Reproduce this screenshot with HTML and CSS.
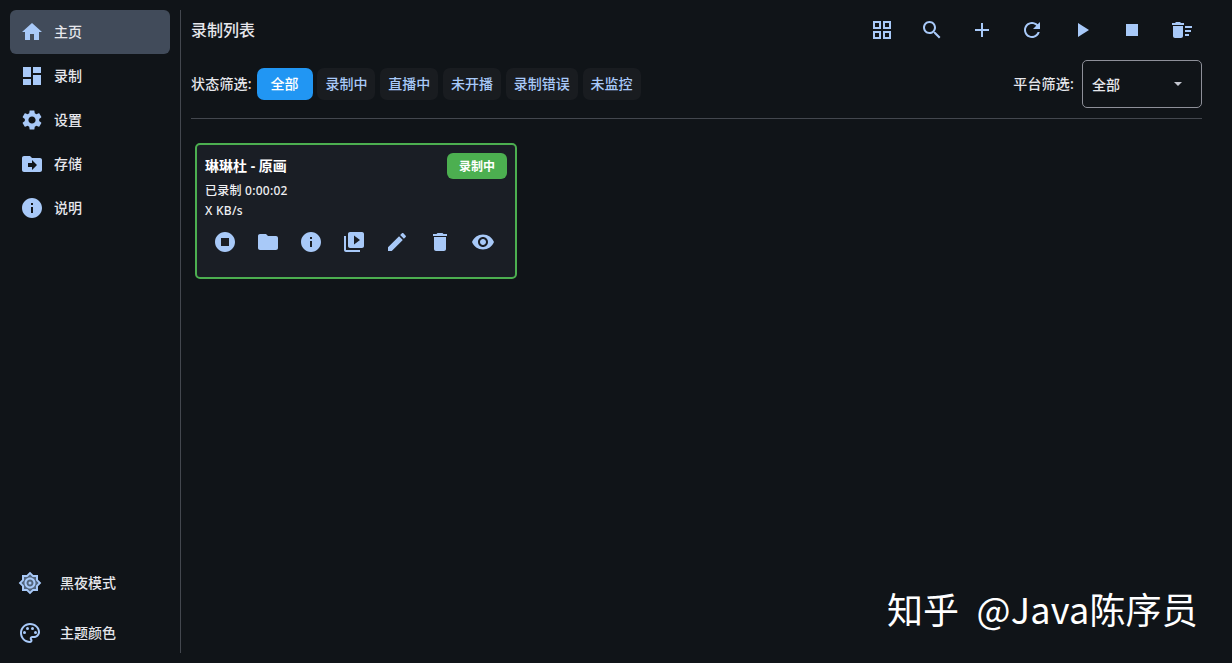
FILE: index.html
```html
<!DOCTYPE html>
<html lang="zh-CN">
<head>
  <meta charset="UTF-8"/>
  <title>录制列表</title>
  <link rel="stylesheet" href="styles.css">
</head>
<body>
  <div class="app">
    <nav class="rail">
      <div class="rail-list">
        <div class="rail-item active">
          <svg class="icon" viewBox="0 0 24 24"><path d="M10 20v-6h4v6h5v-8h3L12 3 2 12h3v8z"/></svg>
          <span>主页</span>
        </div>
        <div class="rail-item">
          <svg class="icon" viewBox="0 0 24 24"><path d="M3 13h8V3H3v10zm0 8h8v-6H3v6zm10 0h8V11h-8v10zm0-18v6h8V3h-8z"/></svg>
          <span>录制</span>
        </div>
        <div class="rail-item">
          <svg class="icon" viewBox="0 0 24 24"><path d="M19.14 12.94c.04-.3.06-.61.06-.94 0-.32-.02-.64-.07-.94l2.03-1.58c.18-.14.23-.41.12-.61l-1.92-3.32c-.12-.22-.37-.29-.59-.22l-2.39.96c-.5-.38-1.03-.7-1.62-.94l-.36-2.54c-.04-.24-.24-.41-.48-.41h-3.84c-.24 0-.43.17-.47.41l-.36 2.54c-.59.24-1.13.57-1.62.94l-2.39-.96c-.22-.08-.47 0-.59.22L2.74 8.87c-.12.21-.08.47.12.61l2.03 1.58c-.05.3-.09.63-.09.94s.02.64.07.94l-2.03 1.58c-.18.14-.23.41-.12.61l1.92 3.32c.12.22.37.29.59.22l2.39-.96c.5.38 1.03.7 1.62.94l.36 2.54c.05.24.24.41.48.41h3.84c.24 0 .44-.17.47-.41l.36-2.54c.59-.24 1.13-.56 1.62-.94l2.39.96c.22.08.47 0 .59-.22l1.92-3.32c.12-.22.07-.47-.12-.61l-2.01-1.58zM12 15.6c-1.98 0-3.6-1.62-3.6-3.6s1.62-3.6 3.6-3.6 3.6 1.62 3.6 3.6-1.62 3.6-3.6 3.6z"/></svg>
          <span>设置</span>
        </div>
        <div class="rail-item">
          <svg class="icon" viewBox="0 0 24 24"><path d="M20 6h-8l-2-2H4c-1.1 0-2 .9-2 2v12c0 1.1.9 2 2 2h16c1.1 0 2-.9 2-2V8c0-1.1-.9-2-2-2zm-8 12v-3H8v-4h4V8l5 5-5 5z"/></svg>
          <span>存储</span>
        </div>
        <div class="rail-item">
          <svg class="icon" viewBox="0 0 24 24"><path d="M12 2C6.48 2 2 6.48 2 12s4.48 10 10 10 10-4.48 10-10S17.52 2 12 2zm1 15h-2v-6h2v6zm0-8h-2V7h2v2z"/></svg>
          <span>说明</span>
        </div>
      </div>
      <div class="rail-foot">
        <div class="foot-item">
          <span class="foot-btn"><svg class="icon" viewBox="0 0 24 24"><path opacity=".45" d="M18 9.52V6h-3.52L12 3.52 9.52 6H6v3.52L3.52 12 6 14.48V18h3.52L12 20.48 14.48 18H18v-3.52L20.48 12 18 9.52z"/><path d="M20 8.69V4h-4.69L12 .69 8.69 4H4v4.69L.69 12 4 15.31V20h4.69L12 23.31 15.31 20H20v-4.69L23.31 12 20 8.69zm-2 5.79V18h-3.52L12 20.48 9.52 18H6v-3.52L3.52 12 6 9.52V6h3.52L12 3.52 14.48 6H18v3.52L20.48 12 18 14.48zM12 6.5c-3.03 0-5.5 2.47-5.5 5.5s2.47 5.5 5.5 5.5 5.5-2.47 5.5-5.5-2.47-5.5-5.5-5.5zm0 9c-1.93 0-3.5-1.57-3.5-3.5s1.57-3.5 3.5-3.5 3.5 1.57 3.5 3.5-1.57 3.5-3.5 3.5z"/><circle cx="12" cy="12" r="1.5"/></svg></span>
          <span>黑夜模式</span>
        </div>
        <div class="foot-item">
          <span class="foot-btn"><svg class="icon" viewBox="0 0 24 24"><path d="M12 22C6.49 22 2 17.51 2 12S6.49 2 12 2s10 4.04 10 9c0 3.31-2.69 6-6 6h-1.77c-.28 0-.5.22-.5.5 0 .12.05.23.13.33.41.47.64 1.06.64 1.67 0 1.38-1.12 2.5-2.5 2.5zm0-18c-4.41 0-8 3.59-8 8s3.59 8 8 8c.28 0 .5-.22.5-.5a.54.54 0 0 0-.14-.35c-.41-.46-.63-1.05-.63-1.65 0-1.38 1.12-2.5 2.5-2.5H16c2.21 0 4-1.79 4-4 0-3.86-3.59-7-8-7z"/><circle cx="6.5" cy="11.5" r="1.5"/><circle cx="9.5" cy="7.5" r="1.5"/><circle cx="14.5" cy="7.5" r="1.5"/><circle cx="17.5" cy="11.5" r="1.5"/></svg></span>
          <span>主题颜色</span>
        </div>
      </div>
    </nav>

    <div class="rail-line"></div>

    <main class="main">
      <header class="top-row">
        <h1 class="title">录制列表</h1>
        <div class="tools">
          <span class="btn"><svg class="icon" viewBox="0 0 24 24"><path d="M3 3v8h8V3H3zm6 6H5V5h4v4zm-6 4v8h8v-8H3zm6 6H5v-4h4v4zm4-16v8h8V3h-8zm6 6h-4V5h4v4zm-6 4v8h8v-8h-8zm6 6h-4v-4h4v4z"/></svg></span>
          <span class="btn"><svg class="icon" viewBox="0 0 24 24"><path d="M15.5 14h-.79l-.28-.27C15.41 12.59 16 11.11 16 9.5 16 5.91 13.09 3 9.5 3S3 5.91 3 9.5 5.91 16 9.5 16c1.61 0 3.09-.59 4.23-1.57l.27.28v.79l5 4.99L20.49 19l-4.99-5zm-6 0C7.01 14 5 11.99 5 9.5S7.01 5 9.5 5 14 7.01 14 9.5 11.99 14 9.5 14z"/></svg></span>
          <span class="btn"><svg class="icon" viewBox="0 0 24 24"><path d="M19 13h-6v6h-2v-6H5v-2h6V5h2v6h6v2z"/></svg></span>
          <span class="btn"><svg class="icon" viewBox="0 0 24 24"><path d="M17.65 6.35C16.2 4.9 14.21 4 12 4c-4.42 0-7.99 3.58-7.99 8s3.57 8 7.99 8c3.73 0 6.84-2.55 7.73-6h-2.08c-.82 2.33-3.04 4-5.65 4-3.31 0-6-2.69-6-6s2.69-6 6-6c1.66 0 3.14.69 4.22 1.78L13 11h7V4l-2.35 2.35z"/></svg></span>
          <span class="btn"><svg class="icon" viewBox="0 0 24 24"><path d="M8 5v14l11-7z"/></svg></span>
          <span class="btn"><svg class="icon" viewBox="0 0 24 24"><path d="M6 6h12v12H6z"/></svg></span>
          <span class="btn"><svg class="icon" viewBox="0 0 24 24"><path d="M15 16h4v2h-4zm0-8h7v2h-7zm0 4h6v2h-6zM3 18c0 1.1.9 2 2 2h6c1.1 0 2-.9 2-2V8H3v10zM14 5h-3l-1-1H6L5 5H2v2h12z"/></svg></span>
        </div>
      </header>

      <section class="filter-row">
        <div class="status-filter">
          <span class="label">状态筛选:</span>
          <span class="chip chip-on">全部</span>
          <span class="chip">录制中</span>
          <span class="chip">直播中</span>
          <span class="chip">未开播</span>
          <span class="chip">录制错误</span>
          <span class="chip">未监控</span>
        </div>
        <div class="platform-filter">
          <span class="label">平台筛选:</span>
          <div class="select">
            <span>全部</span>
            <i class="caret"></i>
          </div>
        </div>
      </section>

      <div class="divider"></div>

      <section class="cards">
        <article class="card">
          <div class="card-head">
            <span class="card-title">琳琳杜 - 原画</span>
            <span class="badge">录制中</span>
          </div>
          <div class="card-line">已录制 0:00:02</div>
          <div class="card-line">X KB/s</div>
          <div class="card-actions">
            <span class="btn"><svg class="icon" viewBox="0 0 24 24"><path d="M12 2C6.48 2 2 6.48 2 12s4.48 10 10 10 10-4.48 10-10S17.52 2 12 2zm4 14H8V8h8v8z"/></svg></span>
            <span class="btn"><svg class="icon" viewBox="0 0 24 24"><path d="M10 4H4c-1.1 0-1.99.9-1.99 2L2 18c0 1.1.9 2 2 2h16c1.1 0 2-.9 2-2V8c0-1.1-.9-2-2-2h-8l-2-2z"/></svg></span>
            <span class="btn"><svg class="icon" viewBox="0 0 24 24"><path d="M12 2C6.48 2 2 6.48 2 12s4.48 10 10 10 10-4.48 10-10S17.52 2 12 2zm1 15h-2v-6h2v6zm0-8h-2V7h2v2z"/></svg></span>
            <span class="btn"><svg class="icon" viewBox="0 0 24 24"><path d="M4 6H2v14c0 1.1.9 2 2 2h14v-2H4V6zm16-4H8c-1.1 0-2 .9-2 2v12c0 1.1.9 2 2 2h12c1.1 0 2-.9 2-2V4c0-1.1-.9-2-2-2zm-8 12.5v-9l6 4.5-6 4.5z"/></svg></span>
            <span class="btn"><svg class="icon" viewBox="0 0 24 24"><path d="M3 17.25V21h3.75L17.81 9.94l-3.75-3.75L3 17.25zM20.71 7.04c.39-.39.39-1.02 0-1.41l-2.34-2.34c-.39-.39-1.02-.39-1.41 0l-1.83 1.83 3.75 3.75 1.83-1.83z"/></svg></span>
            <span class="btn"><svg class="icon" viewBox="0 0 24 24"><path d="M6 19c0 1.1.9 2 2 2h8c1.1 0 2-.9 2-2V7H6v12zM19 4h-3.5l-1-1h-5l-1 1H5v2h14V4z"/></svg></span>
            <span class="btn"><svg class="icon" viewBox="0 0 24 24"><path d="M12 4.5C7 4.5 2.73 7.61 1 12c1.73 4.39 6 7.5 11 7.5s9.27-3.11 11-7.5c-1.73-4.39-6-7.5-11-7.5zM12 17c-2.76 0-5-2.24-5-5s2.24-5 5-5 5 2.24 5 5-2.24 5-5 5zm0-8c-1.66 0-3 1.34-3 3s1.34 3 3 3 3-1.34 3-3-1.34-3-3-3z"/></svg></span>
          </div>
        </article>
      </section>
    </main>
  </div>

  <div class="watermark">知乎 @Java陈序员</div>
</body>
</html>
```

FILE: styles.css
```css
* { box-sizing: border-box; }
body { margin: 0; height: 100vh; overflow: hidden; position: relative; background: #101418; color: #e6e7ec; font-family: "Noto Sans", "Noto Sans CJK SC", sans-serif; font-size: 14px; line-height: 20px; font-weight: 500; }
.icon { width: 24px; height: 24px; fill: #a8c9f8; display: block; flex: none; }

.app { display: flex; height: 100%; padding: 10px 30px 10px 10px; }

.rail { width: 160px; flex: none; display: flex; flex-direction: column; justify-content: space-between; }
.rail-item { height: 44px; display: flex; align-items: center; gap: 10px; padding-left: 10px; border-radius: 6px; }
.rail-item.active { background: #414b5a; }
.rail-foot { display: flex; flex-direction: column; gap: 10px; }
.foot-item { height: 40px; display: flex; align-items: center; gap: 10px; }
.foot-btn { width: 40px; height: 40px; display: flex; align-items: center; justify-content: center; }
.rail-line { width: 1px; flex: none; margin: 0 10px; background: #43474e; }

.main { flex: 1; min-width: 0; display: flex; flex-direction: column; }
.top-row { height: 40px; display: flex; align-items: center; justify-content: space-between; }
.title { margin: 0; font-size: 16px; font-weight: 500; }
.tools { display: flex; gap: 10px; }
.btn { width: 40px; height: 40px; display: flex; align-items: center; justify-content: center; }

.filter-row { height: 48px; margin-top: 10px; display: flex; align-items: center; justify-content: space-between; }
.status-filter { display: flex; align-items: center; gap: 4.8px; }
.label { letter-spacing: .2px; }
.chip { height: 32px; padding: 0 8px; display: flex; align-items: center; border-radius: 7px; background: #191c20; color: #a8c9f8; }
.chip-on { padding: 0 14px; background: #2196f3; color: #fff; }
.platform-filter { display: flex; align-items: center; gap: 8px; }
.select { width: 120px; height: 48px; padding: 0 19px 0 9px; display: flex; align-items: center; justify-content: space-between; border: 1px solid #8e9099; border-radius: 5px; }
.select span { margin-top: 2px; }
.caret { width: 0; height: 0; border-left: 4px solid transparent; border-right: 4px solid transparent; border-top: 4px solid #c4c6d0; }

.divider { height: 1px; margin-top: 10px; background: #43474e; }

.cards { padding: 24px 4px 0; }
.card { width: 322px; height: 136px; padding: 8px; border: 2px solid #4caf50; border-radius: 5px; background: #1a1e25; }
.card-head { height: 26px; margin-bottom: 2px; display: flex; align-items: center; justify-content: space-between; }
.card-title { font-weight: 700; color: #fff; }
.badge { width: 60px; height: 26px; padding-top: 2px; display: flex; align-items: center; justify-content: center; border-radius: 6px; background: #4caf50; color: #fff; font-size: 12px; font-weight: 700; }
.card-line { height: 20px; font-size: 12px; letter-spacing: .25px; color: #f0f0f3; }
.card-actions { display: flex; gap: 3px; margin-top: 1px; }

.watermark { position: absolute; right: 34px; bottom: 37px; font-size: 36px; line-height: 1; font-weight: 400; letter-spacing: .2px; word-spacing: 9px; color: #fff; white-space: nowrap; font-family: "Noto Sans CJK SC", sans-serif; }
```
